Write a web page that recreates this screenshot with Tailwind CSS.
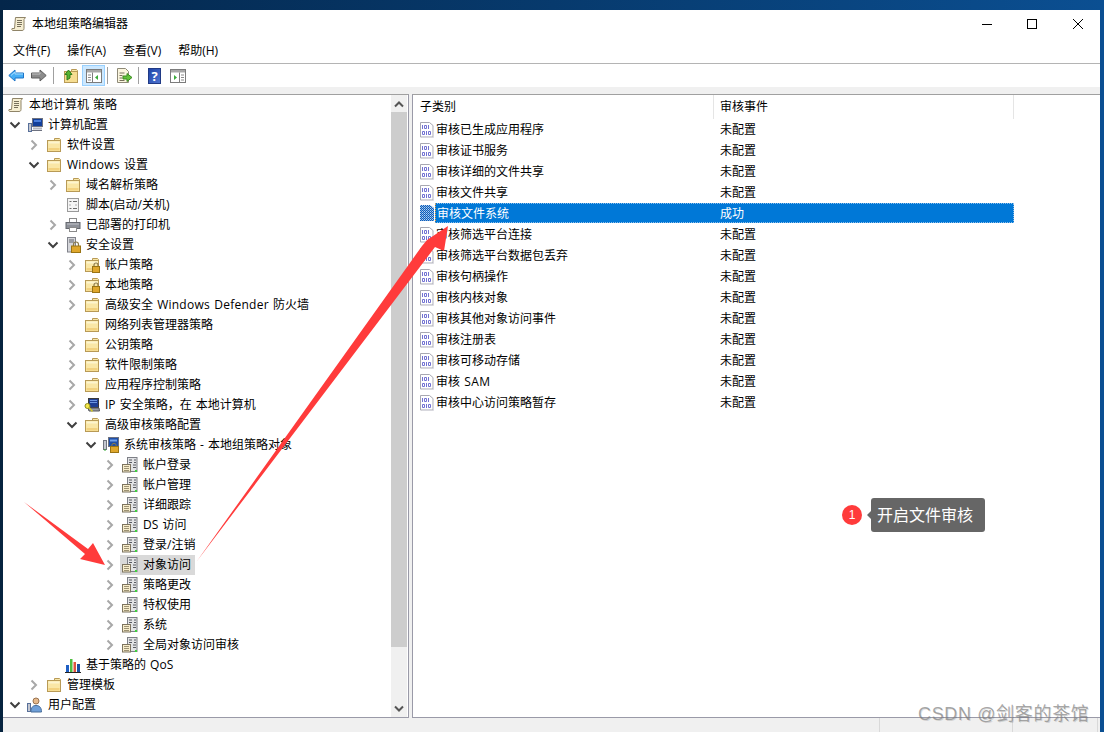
<!DOCTYPE html>
<html lang="zh-CN">
<head>
<meta charset="utf-8">
<title>本地组策略编辑器</title>
<script src="https://cdn.jsdelivr.net/npm/@tailwindcss/browser@4"></script>
</head>
<body class="m-0">
<svg width="0" height="0" class="absolute">
<defs>
<symbol id="cr" viewBox="0 0 16 16"><path d="M5.5 3.5 10 8l-4.500 4.500" fill="none" stroke="#a8a8a8" stroke-width="2"/></symbol>
<symbol id="cd" viewBox="0 0 16 16"><path d="M3.500 5.500 8 10l4.500-4.500" fill="none" stroke="#404040" stroke-width="2"/></symbol>
<symbol id="folder" viewBox="0 0 16 16"><path d="M8.500 3.500V1.500h5l1 1v1" fill="#f7e6a8" stroke="#b89a56"/><rect x="1.500" y="3.500" width="13" height="11" fill="#fae7a6" stroke="#b89a56"/><path d="M2.500 4.500h11v2h-11z" fill="#fdf4cf"/><path d="M2.500 11h11v2.500h-11z" fill="#f3d27f"/></symbol>
<symbol id="lock" viewBox="0 0 16 16"><path d="M10 9.500V8a2 2 0 0 1 4 0v1.500" fill="none" stroke="#8a7a4a" stroke-width="1.200"/><rect x="8.500" y="9.500" width="7" height="6" fill="#dfa72c" stroke="#9a7414"/></symbol>
<symbol id="scroll" viewBox="0 0 16 16"><path d="M4.500 1.500h10l-1.500 2v9c0 1-.5 2-2 2h-9c-1 0-1.500-1-1-2h2.500z" fill="#f6eed2" stroke="#8f8468"/><path d="M6 4.500h5M6 6.500h5M6 8.500h5M6 10.500h4" stroke="#77705c"/></symbol>
<symbol id="pc" viewBox="0 0 16 16"><rect x="5.500" y="1.500" width="10" height="8" fill="#123f9a" stroke="#6e7280"/><path d="M7 3h7v2H7z" fill="#4a7ddb"/><path d="M6 10.500h9v2H6z" fill="#b4b7bf"/><rect x="1.500" y="6.500" width="3" height="8" fill="#c4c7d0" stroke="#58709a"/><path d="M5 13.500h10" stroke="#6e7280"/></symbol>
<symbol id="script" viewBox="0 0 16 16"><rect x="2.500" y="1.500" width="11" height="13" fill="#f4f4f4" stroke="#9a9a9a"/><path d="M4.500 4.500h2M8 4.500h4M4.500 8h1M10.500 8h1M4.500 11.500h2M8 11.500h4" stroke="#6a6a6a"/></symbol>
<symbol id="printer" viewBox="0 0 16 16"><rect x="4.500" y="1.500" width="7" height="4" fill="#fff" stroke="#8a8a8a"/><rect x="1" y="5.500" width="14" height="6" fill="#8d9098" stroke="#65686f"/><path d="M2 7h12" stroke="#c0c2c8"/><rect x="4.500" y="10.500" width="7" height="4" fill="#fff" stroke="#8a8a8a"/></symbol>
<symbol id="sec" viewBox="0 0 16 16"><rect x="2.500" y=".5" width="8" height="14.500" fill="#d5d6da" stroke="#80828a"/><path d="M4 3h5M4 5h5" stroke="#60626a"/><path d="M8.500 9V7.500a2.500 2.500 0 0 1 5 0V9" fill="none" stroke="#8a7a4a" stroke-width="1.200"/><rect x="6.500" y="9" width="9" height="6.500" fill="#dfa72c" stroke="#9a7414"/></symbol>
<symbol id="ip" viewBox="0 0 16 16"><rect x="4.500" y="1.500" width="10" height="9" fill="#1f3f94" stroke="#3a3a3a"/><path d="M6 3.500h7M6 5.500h7" stroke="#6e96e0"/><path d="M4 11h11l.5 3H5z" fill="#9a9ca2" stroke="#55565b"/><circle cx="3.500" cy="9" r="2.500" fill="#f5e84a" stroke="#8f8a20"/><path d="m5 10.500 3.500 4" stroke="#d4c92a" stroke-width="1.500"/></symbol>
<symbol id="sys" viewBox="0 0 16 16"><rect x="5.500" y=".5" width="10" height="9" fill="#1f4fa8" stroke="#6e7280"/><path d="M7 2.500h7v2H7z" fill="#71a1ea"/><rect x=".5" y="3.500" width="3" height="9" fill="#c4c7d0" stroke="#70747f"/><path d="M1 13h2" stroke="#33aa33"/><path d="M8.800 9.500V8.500a2.200 2.200 0 0 1 4.400 0v1" fill="none" stroke="#8a7a4a"/><rect x="7.500" y="9.500" width="8" height="6" fill="#dfa72c" stroke="#9a7414"/></symbol>
<symbol id="audit" viewBox="0 0 16 16"><rect x="5.500" y=".5" width="9.500" height="14" fill="#e2e3e6" stroke="#7d7f86"/><path d="M7 3h3M12 3h2M7 5.500h3M12 5.500h2M11 8h3M11 10.500h3" stroke="#585a60"/><rect x=".5" y="7.500" width="8" height="7.500" fill="#f7eccb" stroke="#7d7460"/><path d="M2 9.500h5M2 11.500h5M2 13.500h5" stroke="#9c9273"/><rect x="13" y="13" width="2" height="2" fill="#3fd13f"/></symbol>
<symbol id="qos" viewBox="0 0 16 16"><rect x="1" y="8" width="3" height="7" fill="#1f5fc4"/><rect x="5" y="2" width="2.500" height="13" fill="#4fbf3f"/><rect x="8.500" y="5" width="2.500" height="10" fill="#e0553f"/><rect x="12" y="7" width="3" height="8" fill="#1b4fa0"/><path d="M0 15.500h16" stroke="#222"/></symbol>
<symbol id="user" viewBox="0 0 16 16"><rect x=".5" y="6.500" width="3" height="8" fill="#c4c7d0" stroke="#58709a"/><circle cx="9" cy="4" r="3" fill="#e6b98c" stroke="#9a7350"/><path d="M4 15c0-5 2-6.500 5-6.500s5.500 1.500 5.500 6.500z" fill="#6f9fd8" stroke="#4a6f9c"/></symbol>
<symbol id="bin" viewBox="0 0 14 16"><path d="M.5.500h9l3.500 3v11.500H.5z" fill="#fff" stroke="#a8a8b2"/><path d="M13.500 5v10.500H2" fill="none" stroke="#d8d8de"/><g fill="none" stroke="#7272d2"><path d="M2.500 3v4"/><path d="M4.500 3.500h2v3h-2z"/><path d="M8.500 3v4"/><path d="M2.500 9.500h2v3h-2z"/><path d="M6.500 9v4"/><path d="M8.500 9.500h2v3h-2z"/></g></symbol>
<symbol id="binsel" viewBox="0 0 14 16"><defs><pattern id="dith" width="2" height="2" patternUnits="userSpaceOnUse"><rect width="2" height="2" fill="#0a5fc0"/><rect width="1" height="1" fill="#b9d3ee"/><rect x="1" y="1" width="1" height="1" fill="#7fa8d8"/></pattern></defs><path d="M0 0h10l4 3v13H0z" fill="url(#dith)"/></symbol>
</defs>
</svg>

<div class="relative w-[1104px] h-[732px] overflow-hidden bg-gradient-to-r from-[#04264a] to-[#0b4f92] font-['Open_Sans','Noto_Sans_CJK_SC',sans-serif] text-[12px] leading-[16px] text-black [word-spacing:1px]">
  <div class="absolute left-0 top-[10px] w-[3px] h-[722px] bg-[#06233f]"></div>

  <div class="absolute left-[3px] top-[10px] w-[1097px] h-[722px] bg-white flex flex-col">
    <!-- title bar -->
    <div class="h-[28px] flex items-center shrink-0">
      <svg class="w-4 h-4 ml-[8px]"><use href="#scroll"/></svg>
      <span class="ml-[5px] flex-1">本地组策略编辑器</span>
      <svg class="w-[10px] h-[10px] mr-[35px]" viewBox="0 0 10 10"><path d="M0 5.500h10" stroke="#000"/></svg>
      <svg class="w-[10px] h-[10px] mr-[36px]" viewBox="0 0 10 10"><rect x=".5" y=".5" width="9" height="9" fill="none" stroke="#000"/></svg>
      <svg class="w-[10px] h-[10px] mr-[17px]" viewBox="0 0 10 10"><path d="m0 0 10 10M10 0 0 10" stroke="#000"/></svg>
    </div>
    <!-- menu -->
    <div class="h-[26px] flex items-center gap-[17px] pl-[10px] border-b border-[#b4b4b4] shrink-0">
      <span>文件(F)</span><span>操作(A)</span><span>查看(V)</span><span>帮助(H)</span>
    </div>
    <!-- toolbar -->
    <div class="h-[23px] flex items-center shrink-0 pl-[5px]">
      <svg class="w-4 h-4" viewBox="0 0 16 16"><path d="M.8 7.500 7 2v3h8.500v5H7v3z" fill="#47aef5" stroke="#1c74c8"/><path d="M3 7.500 7 4v2h8" fill="none" stroke="#a8dcff"/></svg>
      <svg class="w-4 h-4 ml-[7px]" viewBox="0 0 16 16"><path d="M15.200 7.500 9 2v3H.5v5H9v3z" fill="#8c8c8c" stroke="#5e5e5e"/><path d="M1 6h8V4" fill="none" stroke="#c4c4c4"/></svg>
      <div class="w-px h-[17px] bg-[#a0a0a0] ml-[6px]"></div>
      <svg class="w-4 h-4 ml-[9px]" viewBox="0 0 16 16"><path d="M8.500 3.500V1.500h5l1 1v1" fill="#f7e6a8" stroke="#b89a56"/><rect x="1.500" y="3.500" width="13" height="11" fill="#f6dd91" stroke="#b89a56"/><path d="M4 12V6.500H2L5.500 2 9 6.500H7V10z" fill="#55b332" stroke="#2e7d1c"/></svg>
      <div class="w-[23px] h-[21px] ml-[3px] bg-[#cce8ff] border border-[#99d1ff] flex items-center justify-center">
        <svg class="w-4 h-4" viewBox="0 0 16 16"><rect x=".5" y="1.500" width="15" height="13" fill="#fff" stroke="#7c7c7c"/><path d="M1 2h14v2.500H1z" fill="#a8a8a8"/><path d="M6.500 4.500v10" stroke="#7c7c7c"/><path d="M2 7h3M2 9.500h3M2 12h3" stroke="#8a8a8a"/><path d="M12 7v5L9 9.500z" fill="#3aaa3a"/></svg>
      </div>
      <div class="w-px h-[17px] bg-[#a0a0a0] ml-[2px]"></div>
      <svg class="w-4 h-4 ml-[8px]" viewBox="0 0 16 16"><path d="M1.500.5h8l3 3v11h-11z" fill="#fbf6df" stroke="#8f8a78"/><path d="M3.500 5h5M3.500 7.500h3M3.500 10h3M3.500 12.500h5" stroke="#77705c"/><path d="M7 8h4V5.500L16 9.500l-5 4V11H7z" fill="#61c23a" stroke="#3a8a20"/></svg>
      <div class="w-px h-[17px] bg-[#a0a0a0] ml-[6px]"></div>
      <div class="w-[13px] h-4 ml-[9px] bg-gradient-to-br from-[#1f44a8] to-[#4e74d0] border border-[#203a85] flex items-center justify-center text-white text-[13px] font-bold">?</div>
      <svg class="w-4 h-4 ml-[9px]" viewBox="0 0 16 16"><rect x=".5" y="1.500" width="15" height="13" fill="#fff" stroke="#7c7c7c"/><path d="M1 2h14v2.500H1z" fill="#a8a8a8"/><path d="M9.500 4.500v10" stroke="#7c7c7c"/><path d="M11 7h3M11 9.500h3M11 12h3" stroke="#8a8a8a"/><path d="M4 7v5l3-2.500z" fill="#3aaa3a"/></svg>
    </div>
    <div class="h-[7px] bg-[#f0f0f0] shrink-0"></div>

    <!-- panes -->
    <div class="flex h-[624px] shrink-0">
      <div class="w-[406px] border-t border-b border-r border-t-[#a0a0a0] border-b-[#9a9aa8] border-r-[#9a9aa8] flex">
        <div class="flex-1">
          <div class="flex items-center h-5 pl-[5px]"><svg class="w-4 h-4"><use href="#scroll"/></svg><span class="ml-[5px]">本地计算机 策略</span></div>
          <div class="flex items-center h-5 pl-[4px]"><svg class="w-4 h-4"><use href="#cd"/></svg><svg class="w-4 h-4 ml-1"><use href="#pc"/></svg><span class="ml-[5px]">计算机配置</span></div>
          <div class="flex items-center h-5 pl-[23px]"><svg class="w-4 h-4"><use href="#cr"/></svg><svg class="w-4 h-4 ml-1"><use href="#folder"/></svg><span class="ml-[5px]">软件设置</span></div>
          <div class="flex items-center h-5 pl-[23px]"><svg class="w-4 h-4"><use href="#cd"/></svg><svg class="w-4 h-4 ml-1"><use href="#folder"/></svg><span class="ml-[5px]"><span class="tracking-[0.25px]">Windows</span> 设置</span></div>
          <div class="flex items-center h-5 pl-[42px]"><svg class="w-4 h-4"><use href="#cr"/></svg><svg class="w-4 h-4 ml-1"><use href="#folder"/></svg><span class="ml-[5px]">域名解析策略</span></div>
          <div class="flex items-center h-5 pl-[62px]"><svg class="w-4 h-4"><use href="#script"/></svg><span class="ml-[5px]">脚本(启动/关机)</span></div>
          <div class="flex items-center h-5 pl-[42px]"><svg class="w-4 h-4"><use href="#cr"/></svg><svg class="w-4 h-4 ml-1"><use href="#printer"/></svg><span class="ml-[5px]">已部署的打印机</span></div>
          <div class="flex items-center h-5 pl-[42px]"><svg class="w-4 h-4"><use href="#cd"/></svg><svg class="w-4 h-4 ml-1"><use href="#sec"/></svg><span class="ml-[5px]">安全设置</span></div>
          <div class="flex items-center h-5 pl-[61px]"><svg class="w-4 h-4"><use href="#cr"/></svg><svg class="w-4 h-4 ml-1"><use href="#folder"/><use href="#lock"/></svg><span class="ml-[5px]">帐户策略</span></div>
          <div class="flex items-center h-5 pl-[61px]"><svg class="w-4 h-4"><use href="#cr"/></svg><svg class="w-4 h-4 ml-1"><use href="#folder"/><use href="#lock"/></svg><span class="ml-[5px]">本地策略</span></div>
          <div class="flex items-center h-5 pl-[61px]"><svg class="w-4 h-4"><use href="#cr"/></svg><svg class="w-4 h-4 ml-1"><use href="#folder"/></svg><span class="ml-[5px]">高级安全 <span class="tracking-[0.25px]">Windows Defender</span> 防火墙</span></div>
          <div class="flex items-center h-5 pl-[81px]"><svg class="w-4 h-4"><use href="#folder"/></svg><span class="ml-[5px]">网络列表管理器策略</span></div>
          <div class="flex items-center h-5 pl-[61px]"><svg class="w-4 h-4"><use href="#cr"/></svg><svg class="w-4 h-4 ml-1"><use href="#folder"/></svg><span class="ml-[5px]">公钥策略</span></div>
          <div class="flex items-center h-5 pl-[61px]"><svg class="w-4 h-4"><use href="#cr"/></svg><svg class="w-4 h-4 ml-1"><use href="#folder"/></svg><span class="ml-[5px]">软件限制策略</span></div>
          <div class="flex items-center h-5 pl-[61px]"><svg class="w-4 h-4"><use href="#cr"/></svg><svg class="w-4 h-4 ml-1"><use href="#folder"/></svg><span class="ml-[5px]">应用程序控制策略</span></div>
          <div class="flex items-center h-5 pl-[61px]"><svg class="w-4 h-4"><use href="#cr"/></svg><svg class="w-4 h-4 ml-1"><use href="#ip"/></svg><span class="ml-[5px]">IP 安全策略，在 本地计算机</span></div>
          <div class="flex items-center h-5 pl-[61px]"><svg class="w-4 h-4"><use href="#cd"/></svg><svg class="w-4 h-4 ml-1"><use href="#folder"/></svg><span class="ml-[5px]">高级审核策略配置</span></div>
          <div class="flex items-center h-5 pl-[80px]"><svg class="w-4 h-4"><use href="#cd"/></svg><svg class="w-4 h-4 ml-1"><use href="#sys"/></svg><span class="ml-[5px]">系统审核策略 - 本地组策略对象</span></div>
          <div class="flex items-center h-5 pl-[99px]"><svg class="w-4 h-4"><use href="#cr"/></svg><svg class="w-4 h-4 ml-1"><use href="#audit"/></svg><span class="ml-[5px]">帐户登录</span></div>
          <div class="flex items-center h-5 pl-[99px]"><svg class="w-4 h-4"><use href="#cr"/></svg><svg class="w-4 h-4 ml-1"><use href="#audit"/></svg><span class="ml-[5px]">帐户管理</span></div>
          <div class="flex items-center h-5 pl-[99px]"><svg class="w-4 h-4"><use href="#cr"/></svg><svg class="w-4 h-4 ml-1"><use href="#audit"/></svg><span class="ml-[5px]">详细跟踪</span></div>
          <div class="flex items-center h-5 pl-[99px]"><svg class="w-4 h-4"><use href="#cr"/></svg><svg class="w-4 h-4 ml-1"><use href="#audit"/></svg><span class="ml-[5px]">DS 访问</span></div>
          <div class="flex items-center h-5 pl-[99px]"><svg class="w-4 h-4"><use href="#cr"/></svg><svg class="w-4 h-4 ml-1"><use href="#audit"/></svg><span class="ml-[5px]">登录/注销</span></div>
          <div class="flex items-center h-5 pl-[99px]"><svg class="w-4 h-4"><use href="#cr"/></svg><div class="flex items-center h-5 ml-[2px] pl-[2px] pr-[4px] bg-[#d9d9d9]"><svg class="w-4 h-4"><use href="#audit"/></svg><span class="ml-[5px]">对象访问</span></div></div>
          <div class="flex items-center h-5 pl-[99px]"><svg class="w-4 h-4"><use href="#cr"/></svg><svg class="w-4 h-4 ml-1"><use href="#audit"/></svg><span class="ml-[5px]">策略更改</span></div>
          <div class="flex items-center h-5 pl-[99px]"><svg class="w-4 h-4"><use href="#cr"/></svg><svg class="w-4 h-4 ml-1"><use href="#audit"/></svg><span class="ml-[5px]">特权使用</span></div>
          <div class="flex items-center h-5 pl-[99px]"><svg class="w-4 h-4"><use href="#cr"/></svg><svg class="w-4 h-4 ml-1"><use href="#audit"/></svg><span class="ml-[5px]">系统</span></div>
          <div class="flex items-center h-5 pl-[99px]"><svg class="w-4 h-4"><use href="#cr"/></svg><svg class="w-4 h-4 ml-1"><use href="#audit"/></svg><span class="ml-[5px]">全局对象访问审核</span></div>
          <div class="flex items-center h-5 pl-[62px]"><svg class="w-4 h-4"><use href="#qos"/></svg><span class="ml-[5px]">基于策略的 QoS</span></div>
          <div class="flex items-center h-5 pl-[23px]"><svg class="w-4 h-4"><use href="#cr"/></svg><svg class="w-4 h-4 ml-1"><use href="#folder"/></svg><span class="ml-[5px]">管理模板</span></div>
          <div class="flex items-center h-5 pl-[4px]"><svg class="w-4 h-4"><use href="#cd"/></svg><svg class="w-4 h-4 ml-1"><use href="#user"/></svg><span class="ml-[5px]">用户配置</span></div>
        </div>
        <!-- scrollbar -->
        <div class="w-[16px] mr-[1px] bg-[#f0f0f0] flex flex-col">
          <div class="h-[17px] flex items-center justify-center"><svg class="w-[10px] h-[8px]" viewBox="0 0 10 8"><path d="M1 6.500 5 2.500l4 4" fill="none" stroke="#555" stroke-width="2"/></svg></div>
          <div class="h-[535px] bg-[#cdcdcd]"></div>
          <div class="flex-1 flex items-end justify-center pb-[4px]"><svg class="w-[10px] h-[8px]" viewBox="0 0 10 8"><path d="M1 1.500 5 5.500l4-4" fill="none" stroke="#555" stroke-width="2"/></svg></div>
        </div>
      </div>
      <div class="w-[3px] bg-[#f0f0f0]"></div>
      <div class="flex-1 border-t border-b border-l border-t-[#a0a0a0] border-b-[#9a9aa8] border-l-[#9a9aa8]">
        <div class="flex h-[24px]">
          <div class="w-[301px] pl-[7px] flex items-center border-r border-[#e5e5e5]">子类别</div>
          <div class="w-[300px] pl-[6px] flex items-center border-r border-[#e5e5e5]">审核事件</div>
        </div>
        <div class="flex items-center h-[21px]"><svg class="w-[14px] h-4 ml-[7px] shrink-0"><use href="#bin"/></svg><span class="ml-[2px] w-[284px]">审核已生成应用程序</span><span>未配置</span></div>
        <div class="flex items-center h-[21px]"><svg class="w-[14px] h-4 ml-[7px] shrink-0"><use href="#bin"/></svg><span class="ml-[2px] w-[284px]">审核证书服务</span><span>未配置</span></div>
        <div class="flex items-center h-[21px]"><svg class="w-[14px] h-4 ml-[7px] shrink-0"><use href="#bin"/></svg><span class="ml-[2px] w-[284px]">审核详细的文件共享</span><span>未配置</span></div>
        <div class="flex items-center h-[21px]"><svg class="w-[14px] h-4 ml-[7px] shrink-0"><use href="#bin"/></svg><span class="ml-[2px] w-[284px]">审核文件共享</span><span>未配置</span></div>
        <div class="flex items-start h-[21px]"><svg class="w-[14px] h-4 ml-[7px] mt-[2px] shrink-0"><use href="#binsel"/></svg><div class="ml-[1px] w-[579px] h-5 pt-px flex items-center bg-[#0078d7] text-white border border-dotted border-[#8fbfea] border-l-[#e0a04a]"><span class="w-[283px] ml-[1px]">审核文件系统</span><span>成功</span></div></div>
        <div class="flex items-center h-[21px]"><svg class="w-[14px] h-4 ml-[7px] shrink-0"><use href="#bin"/></svg><span class="ml-[2px] w-[284px]">审核筛选平台连接</span><span>未配置</span></div>
        <div class="flex items-center h-[21px]"><svg class="w-[14px] h-4 ml-[7px] shrink-0"><use href="#bin"/></svg><span class="ml-[2px] w-[284px]">审核筛选平台数据包丢弃</span><span>未配置</span></div>
        <div class="flex items-center h-[21px]"><svg class="w-[14px] h-4 ml-[7px] shrink-0"><use href="#bin"/></svg><span class="ml-[2px] w-[284px]">审核句柄操作</span><span>未配置</span></div>
        <div class="flex items-center h-[21px]"><svg class="w-[14px] h-4 ml-[7px] shrink-0"><use href="#bin"/></svg><span class="ml-[2px] w-[284px]">审核内核对象</span><span>未配置</span></div>
        <div class="flex items-center h-[21px]"><svg class="w-[14px] h-4 ml-[7px] shrink-0"><use href="#bin"/></svg><span class="ml-[2px] w-[284px]">审核其他对象访问事件</span><span>未配置</span></div>
        <div class="flex items-center h-[21px]"><svg class="w-[14px] h-4 ml-[7px] shrink-0"><use href="#bin"/></svg><span class="ml-[2px] w-[284px]">审核注册表</span><span>未配置</span></div>
        <div class="flex items-center h-[21px]"><svg class="w-[14px] h-4 ml-[7px] shrink-0"><use href="#bin"/></svg><span class="ml-[2px] w-[284px]">审核可移动存储</span><span>未配置</span></div>
        <div class="flex items-center h-[21px]"><svg class="w-[14px] h-4 ml-[7px] shrink-0"><use href="#bin"/></svg><span class="ml-[2px] w-[284px]">审核 <span class="tracking-[0.5px]">SAM</span></span><span>未配置</span></div>
        <div class="flex items-center h-[21px]"><svg class="w-[14px] h-4 ml-[7px] shrink-0"><use href="#bin"/></svg><span class="ml-[2px] w-[284px]">审核中心访问策略暂存</span><span>未配置</span></div>
      </div>
    </div>
    <!-- status bar -->
    <div class="flex-1 bg-[#f0f0f0] flex">
      <div class="w-[877px] border-r border-[#d9d9d9]"></div>
      <div class="w-[133px] border-r border-[#d9d9d9]"></div>
      <div class="w-[85px] border-r border-[#d9d9d9]"></div>
    </div>
  </div>

  <!-- annotations over the picture -->
  <svg class="absolute inset-0 pointer-events-none" width="1104" height="732" viewBox="0 0 1104 732">
    <polygon points="24,502 88,549 93,543 105,565 80,559 85,554" fill="#ff3b3b"/>
    <polygon points="197,561 422,246 427,240 448,226 444,251 435,247" fill="#ff3b3b"/>
  </svg>
  <div class="absolute left-[842px] top-[505px] w-5 h-5 rounded-full bg-[#ff3b3b] text-white text-[12px] leading-5 text-center font-['Liberation_Sans',sans-serif]">1</div>
  <div class="absolute left-[871px] top-[498px] w-[114px] h-[34px] rounded-[3px] bg-[#666] text-white text-[16px] leading-[34px] pl-[6px]">开启文件审核</div>
  <div class="absolute left-[867px] top-[511px] w-0 h-0 border-y-[4px] border-y-transparent border-r-[4px] border-r-[#666]"></div>
  <div class="absolute left-[918px] top-[702px] text-[18px] leading-[24px] tracking-[0.65px] text-[#808080]/70 [word-spacing:0] [text-shadow:1px_1px_0_rgba(0,0,0,0.12)] whitespace-nowrap font-['Liberation_Sans','Noto_Sans_CJK_SC',sans-serif]">CSDN @剑客的茶馆</div>
</div>
</body>
</html>
